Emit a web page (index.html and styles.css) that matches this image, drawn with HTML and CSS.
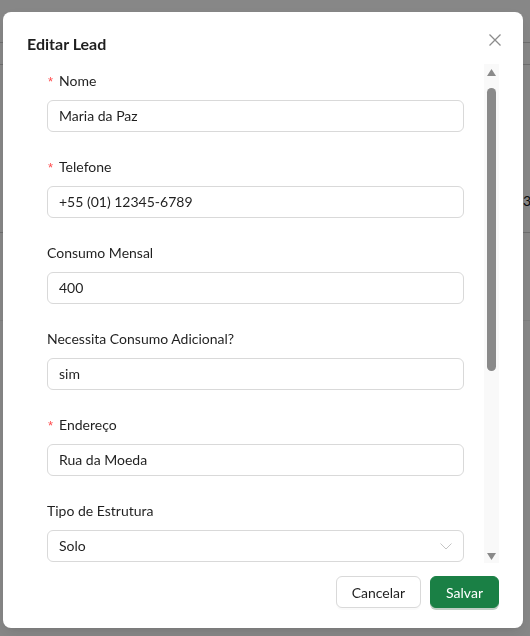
FILE: index.html
```html
<!DOCTYPE html>
<html lang="pt-BR">
<head>
<meta charset="utf-8">
<title>Editar Lead</title>
<link rel="stylesheet" href="styles.css">
</head>
<body>
<div class="bg-page">
  <div class="bg-row bg-row-a"></div>
  <div class="bg-row bg-row-b"></div>
  <div class="bg-row bg-row-c"><span class="bg-num">3</span></div>
  <div class="bg-row bg-row-d"></div>
</div>

<div class="overlay">
  <div class="modal" role="dialog">
    <div class="modal-header">
      <h2 class="modal-title">Editar Lead</h2>
      <button class="modal-close" aria-label="Fechar">
        <svg width="12" height="12" viewBox="0 0 12 12"><path d="M0.5 0.5 L11.5 11.5 M11.5 0.5 L0.5 11.5" stroke="#8c8c8c" stroke-width="1.3" fill="none"/></svg>
      </button>
    </div>

    <div class="modal-body">
      <div class="scroll-content">
        <form class="form">
          <div class="form-item">
            <label class="form-label"><span class="req">*</span>Nome</label>
            <div class="input">Maria da Paz</div>
          </div>
          <div class="form-item">
            <label class="form-label"><span class="req">*</span>Telefone</label>
            <div class="input">+55 (01) 12345-6789</div>
          </div>
          <div class="form-item">
            <label class="form-label">Consumo Mensal</label>
            <div class="input">400</div>
          </div>
          <div class="form-item">
            <label class="form-label">Necessita Consumo Adicional?</label>
            <div class="input">sim</div>
          </div>
          <div class="form-item">
            <label class="form-label"><span class="req">*</span>Endereço</label>
            <div class="input">Rua da Moeda</div>
          </div>
          <div class="form-item">
            <label class="form-label">Tipo de Estrutura</label>
            <div class="input select">
              <span>Solo</span>
              <svg class="chev" width="12" height="7" viewBox="0 0 12 7"><path d="M0.5 0.5 L6 6 L11.5 0.5" stroke="#c4c4c4" stroke-width="1" fill="none"/></svg>
            </div>
          </div>
        </form>
      </div>
      <div class="scrollbar">
        <svg class="sb-arrow" width="9" height="7" viewBox="0 0 9 7"><path d="M4.5 0 L9 7 L0 7 Z" fill="#8a8a8a"/></svg>
        <div class="sb-thumb"></div>
        <div class="sb-space"></div>
        <svg class="sb-arrow" width="9" height="7" viewBox="0 0 9 7"><path d="M0 0 L9 0 L4.5 7 Z" fill="#8a8a8a"/></svg>
      </div>
    </div>

    <div class="modal-footer">
      <button class="btn">Cancelar</button>
      <button class="btn btn-primary">Salvar</button>
    </div>
  </div>
</div>
</body>
</html>
```

FILE: styles.css
```css
* { box-sizing: border-box; }

html, body {
  margin: 0;
  padding: 0;
  width: 530px;
  height: 636px;
  overflow: hidden;
}

body {
  font-family: Lato, "Noto Sans", "Liberation Sans", sans-serif;
  font-size: 14px;
  color: rgba(0, 0, 0, 0.88);
  background: #ffffff;
}

/* background page (under the overlay) */
.bg-page {
  width: 530px;
}
.bg-row {
  border-bottom: 1px solid #d0d0d0;
}
.bg-row-a { height: 43px; }
.bg-row-b { height: 22px; }
.bg-row-c {
  height: 168px;
  display: flex;
  justify-content: flex-end;
  align-items: flex-start;
  padding-top: 126px;
}
.bg-num {
  font-size: 14px;
  color: #111;
  line-height: 20px;
  margin-right: -1px;
}
.bg-row-d { height: 88px; border-bottom-color: #f0f0f0; }

/* overlay */
.overlay {
  position: fixed;
  inset: 0;
  background: rgba(0, 0, 0, 0.47);
}

.modal {
  position: relative;
  margin: 12px 0 0 3px;
  width: 520px;
  height: 616px;
  background: #ffffff;
  border-radius: 8px;
  padding: 20px 24px 20px 24px;
  display: flex;
  flex-direction: column;
  box-shadow: 0 6px 16px rgba(0,0,0,0.08), 0 3px 6px -4px rgba(0,0,0,0.12);
}

.modal-header {
  margin-bottom: 8px;
}
.modal-title {
  margin: 0;
  font-size: 16px;
  font-weight: 700;
  line-height: 24px;
  color: rgba(0, 0, 0, 0.88);
}
.modal-close {
  position: absolute;
  top: 17px;
  right: 17px;
  width: 22px;
  height: 22px;
  padding: 0;
  border: 0;
  background: transparent;
  display: flex;
  align-items: center;
  justify-content: center;
}

.modal-body {
  height: 499px;
  display: flex;
}

.scroll-content {
  flex: 1;
  overflow: hidden;
  padding: 6px 20px 0 20px;
}

.form-item {
  margin-bottom: 24px;
}
.form-label {
  display: flex;
  align-items: center;
  height: 22px;
  margin-bottom: 8px;
  font-size: 14px;
  line-height: 22px;
  color: rgba(0, 0, 0, 0.88);
}
.req {
  color: #ff4d4f;
  font-family: "Liberation Sans", sans-serif;
  font-size: 13px;
  line-height: 1;
  margin-left: 1px;
  margin-right: 6px;
}

.input {
  height: 32px;
  border: 1px solid #d9d9d9;
  border-radius: 6px;
  padding: 0 11px 1px;
  display: flex;
  align-items: center;
  font-size: 14px;
  color: rgba(0, 0, 0, 0.88);
  background: #fff;
}
.select {
  justify-content: space-between;
}
.chev {
  margin-right: 0px;
  margin-top: 1px;
}

.scrollbar {
  width: 15px;
  background: #f9f9f9;
  display: flex;
  flex-direction: column;
  align-items: center;
  padding: 5px 0 3px;
}
.sb-arrow { flex: none; display: block; }
.sb-thumb {
  margin-top: 12px;
  width: 9px;
  height: 283px;
  border-radius: 5px;
  background: #8a8a8a;
}
.sb-space { flex: 1; }

.modal-footer {
  margin-top: 13px;
  display: flex;
  justify-content: flex-end;
  gap: 9px;
}
.btn {
  height: 32px;
  padding: 0 15px;
  font-family: Lato, "Noto Sans", "Liberation Sans", sans-serif;
  font-size: 14px;
  border-radius: 6px;
  border: 1px solid #d9d9d9;
  background: #fff;
  color: rgba(0, 0, 0, 0.88);
  box-shadow: 0 2px 0 rgba(0, 0, 0, 0.02);
}
.btn-primary {
  background: #1a8045;
  border-color: #1a8045;
  color: #fff;
  box-shadow: 0 2px 0 rgba(0, 60, 20, 0.25);
}
```
